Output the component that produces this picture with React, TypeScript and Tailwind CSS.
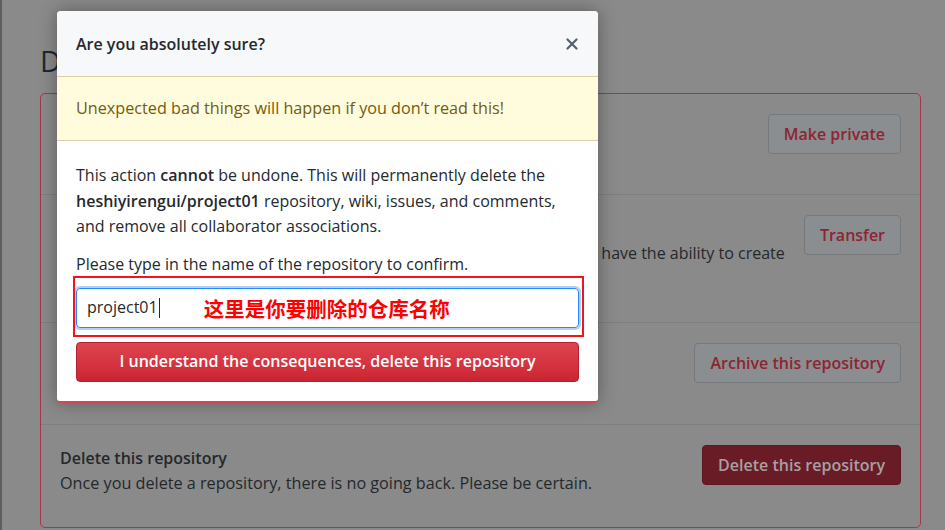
import React from "react";

const font = { fontFamily: '"Open Sans", "Noto Sans CJK SC", sans-serif' };

function GrayButton({ children }: { children: React.ReactNode }) {
  return (
    <button className="h-[40px] shrink-0 rounded-[4px] border border-[#76797c] bg-[#8b8e91] px-[15px] text-[16px] font-semibold text-[#8e2431]">
      {children}
    </button>
  );
}

function Row({
  title,
  desc,
  button,
  descWidth,
  small,
}: {
  title: string;
  desc: string;
  button: React.ReactNode;
  descWidth?: string;
  small?: boolean;
}) {
  return (
    <div className="flex items-start justify-between gap-4 px-[19px] pt-[20px]">
      <div className={`pt-[1px] ${descWidth ?? ""}`}>
        <div className="text-[16px] font-semibold leading-[25px] text-[#24282c]">{title}</div>
        <div className={`${small ? "text-[16px]" : "text-[16.2px]"} leading-[25.5px] text-[#24282c]`}>{desc}</div>
      </div>
      {button}
    </div>
  );
}

export default function App() {
  return (
    <div className="relative h-[530px] w-[945px] overflow-hidden bg-[#8a8a8a]" style={font}>
      {/* underlying page */}
      <div className="flex h-full">
        <div className="w-[2px] bg-[#5e5e5e]" />
        <div className="flex-1 pl-[38px] pr-[24px] pt-[44px]">
          <h2 className="text-[29px] leading-[34px] text-[#1e2830]">Danger Zone</h2>
          <div className="mt-[15px] h-[435px] w-[881px] rounded-[5px] border border-[#a23848]">
            <div className="h-[100px]">
              <Row
                title="Change repository visibility"
                desc="This repository is currently public."
                button={<GrayButton>Make private</GrayButton>}
              />
            </div>
            <div className="h-[128px] border-t border-[#7c7e80]">
              <Row
                title="Transfer ownership"
                desc="Transfer this repository to another user or to an organization where you have the ability to create repositories."
                descWidth="w-[728px]"
                small
                button={<GrayButton>Transfer</GrayButton>}
              />
            </div>
            <div className="h-[102px] border-t border-[#7c7e80]">
              <Row
                title="Archive this repository"
                desc="Mark this repository as archived and read-only."
                button={<GrayButton>Archive this repository</GrayButton>}
              />
            </div>
            <div className="h-[103px] border-t border-[#7c7e80]">
              <Row
                title="Delete this repository"
                desc="Once you delete a repository, there is no going back. Please be certain."
                button={
                  <button className="h-[40px] shrink-0 rounded-[4px] border border-[#5b1820] bg-[#6a1c26] px-[15px] text-[16px] font-semibold text-[#a99fa3]">
                    Delete this repository
                  </button>
                }
              />
            </div>
          </div>
        </div>
      </div>

      {/* modal */}
      <div className="absolute left-[57px] top-[11px] w-[541px] overflow-hidden rounded-[4px] border-b-2 border-[#e0404f] bg-white shadow-[0_0_18px_rgba(0,0,0,0.35)]">
        <div className="flex h-[65px] items-center justify-between bg-[#f6f8fa] px-[19px]">
          <span className="text-[16px] font-semibold text-[#24292e]">Are you absolutely sure?</span>
          <svg width="12" height="12" viewBox="0 0 12 12" className="mr-[1px]">
            <path d="M1.5 1.5 L10.5 10.5 M10.5 1.5 L1.5 10.5" stroke="#586069" strokeWidth="2.2" strokeLinecap="round" />
          </svg>
        </div>
        <div className="flex h-[65px] items-center border-y border-[#d9d0a5] bg-[#fffbdd] px-[19px] text-[16.2px] text-[#735c0f]">
          Unexpected bad things will happen if you don’t read this!
        </div>
        <div className="px-[19px] pb-[19px] pt-[22px] text-[16px] leading-[25.5px] text-[#24292e]">
          <p>
            This action <b className="font-semibold">cannot</b> be undone. This will permanently delete the{" "}
            <b className="font-semibold">heshiyirengui/project01</b> repository, wiki, issues, and comments, and remove
            all collaborator associations.
          </p>
          <p className="mt-[12px]">Please type in the name of the repository to confirm.</p>
          <div className="relative mt-[11px]">
            <div className="flex h-[40px] items-center rounded-[4px] border border-[#2188ff] px-[10px] shadow-[0_0_0_2px_rgba(3,102,214,0.3)]">
              <span className="text-[16px] text-[#24292e]">project01</span>
              <span className="ml-[1px] h-[20px] w-[1px] bg-[#24292e]" />
              <span
                className="ml-[44px] text-[20.5px] font-bold leading-none text-[#ff0000]"
                style={{ fontFamily: '"Noto Sans CJK SC", sans-serif' }}
              >
                这里是你要删除的仓库名称
              </span>
            </div>
            <div className="pointer-events-none absolute left-[-3px] right-[-5px] top-[-12px] h-[61px] border-2 border-[#f0141e]" />
          </div>
          <button className="mt-[14px] h-[40px] w-full rounded-[4px] border border-[#b3202f] bg-gradient-to-b from-[#de4450] to-[#cb2431] text-[16px] font-semibold text-white">
            I understand the consequences, delete this repository
          </button>
        </div>
      </div>
    </div>
  );
}
